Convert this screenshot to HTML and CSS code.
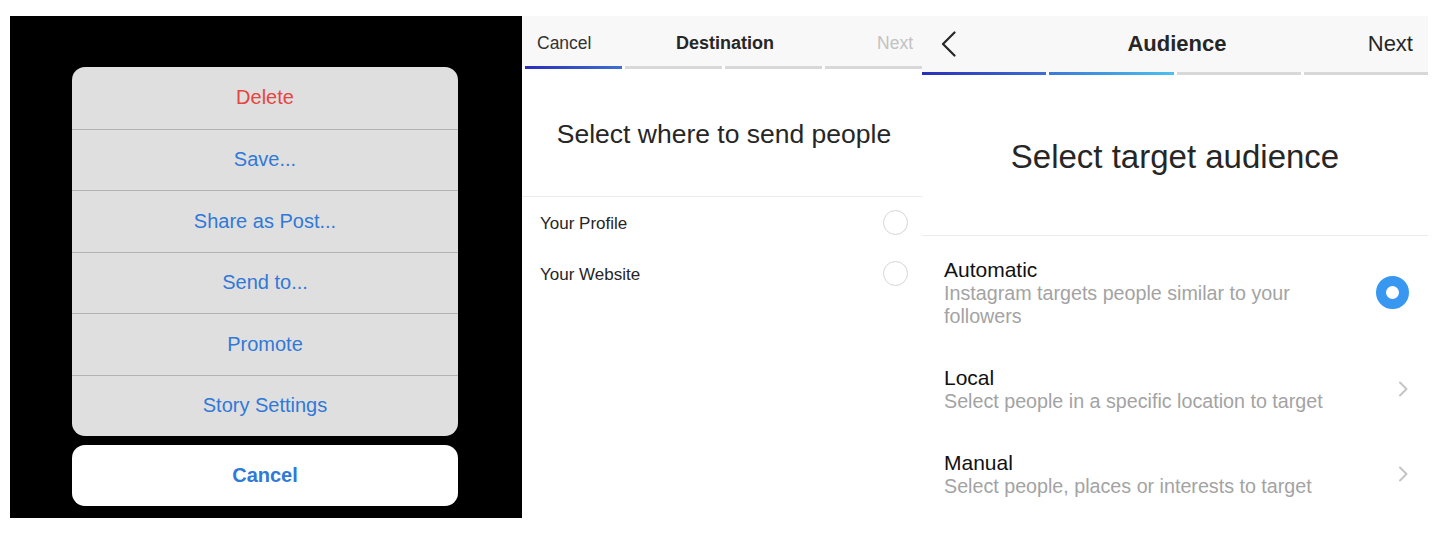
FILE: index.html
```html
<!DOCTYPE html>
<html>
<head>
<meta charset="utf-8">
<link rel="stylesheet" href="styles.css">
</head>
<body>
<div class="strip">
  <section class="sheet-panel">
    <div class="sheet-group">
      <div class="sheet-row danger">Delete</div>
      <div class="sheet-row">Save...</div>
      <div class="sheet-row">Share as Post...</div>
      <div class="sheet-row">Send to...</div>
      <div class="sheet-row">Promote</div>
      <div class="sheet-row">Story Settings</div>
    </div>
    <div class="sheet-cancel">Cancel</div>
  </section>

  <section class="dest-panel">
    <header class="dest-header">
      <span class="dest-left">Cancel</span>
      <span class="dest-title">Destination</span>
      <span class="dest-next">Next</span>
    </header>
    <div class="progress dest-progress">
      <span class="seg seg-dark"></span>
      <span class="seg"></span>
      <span class="seg"></span>
      <span class="seg"></span>
    </div>
    <h2 class="dest-heading">Select where to send people</h2>
    <div class="dest-list">
      <div class="dest-row"><span>Your Profile</span><span class="radio-empty"></span></div>
      <div class="dest-row"><span>Your Website</span><span class="radio-empty"></span></div>
    </div>
  </section>

  <section class="aud-panel">
    <header class="aud-header">
      <svg class="back" width="16" height="26" viewBox="0 0 16 26"><path d="M13.5 1.5 L2 13 L13.5 24.5" fill="none" stroke="#262626" stroke-width="2.2" stroke-linecap="round" stroke-linejoin="round"/></svg>
      <span class="aud-title">Audience</span>
      <span class="aud-next">Next</span>
    </header>
    <div class="progress aud-progress">
      <span class="seg seg-dark"></span>
      <span class="seg seg-light"></span>
      <span class="seg"></span>
      <span class="seg"></span>
    </div>
    <h2 class="aud-heading">Select target audience</h2>
    <div class="aud-list">
      <div class="aud-item">
        <div class="aud-text">
          <div class="aud-name">Automatic</div>
          <div class="aud-desc">Instagram targets people similar to your<br>followers</div>
        </div>
        <span class="radio-on"></span>
      </div>
      <div class="aud-item">
        <div class="aud-text">
          <div class="aud-name">Local</div>
          <div class="aud-desc">Select people in a specific location to target</div>
        </div>
        <svg class="chev" width="11" height="16" viewBox="0 0 11 16"><path d="M2 1.5 L8.5 8 L2 14.5" fill="none" stroke="#c4c4c4" stroke-width="2" stroke-linecap="round" stroke-linejoin="round"/></svg>
      </div>
      <div class="aud-item">
        <div class="aud-text">
          <div class="aud-name">Manual</div>
          <div class="aud-desc">Select people, places or interests to target</div>
        </div>
        <svg class="chev" width="11" height="16" viewBox="0 0 11 16"><path d="M2 1.5 L8.5 8 L2 14.5" fill="none" stroke="#c4c4c4" stroke-width="2" stroke-linecap="round" stroke-linejoin="round"/></svg>
      </div>
    </div>
  </section>
</div>
</body>
</html>
```

FILE: styles.css
```css
* { box-sizing: border-box; margin: 0; padding: 0; }
html, body { background: #ffffff; }
body {
  font-family: "Liberation Sans", Arial, sans-serif;
  width: 1448px;
  height: 538px;
  overflow: hidden;
}
.strip {
  display: flex;
  align-items: flex-start;
  padding: 16px 0 0 10px;
}

/* Left: action sheet */
.sheet-panel {
  width: 512px;
  height: 502px;
  background: #000;
  display: flex;
  flex-direction: column;
  padding: 51px 0 0 62px;
  gap: 9px;
}
.sheet-group {
  width: 386px;
  background: #dfdfdf;
  border-radius: 13px;
  overflow: hidden;
}
.sheet-row {
  height: 61.5px;
  display: flex;
  align-items: center;
  justify-content: center;
  font-size: 20px;
  color: #3179d8;
  border-top: 1px solid #b4b4b4;
}
.sheet-row:first-child { border-top: none; }
.sheet-row.danger { color: #e5463f; }
.sheet-cancel {
  width: 386px;
  height: 61px;
  background: #fff;
  border-radius: 13px;
  display: flex;
  align-items: center;
  justify-content: center;
  font-size: 20px;
  font-weight: bold;
  color: #3179d8;
}

/* Middle: destination */
.dest-panel {
  width: 400px;
  height: 502px;
  background: #fff;
}
.dest-header {
  height: 50px;
  background: #f8f8f8;
  display: grid;
  grid-template-columns: 1fr auto 1fr;
  align-items: center;
  padding: 4px 9px 0 15px;
  font-size: 17.5px;
}
.dest-left { color: #333; }
.dest-title { color: #262626; font-weight: bold; font-size: 18px; }
.dest-next { color: #c2c2c2; justify-self: end; }
.progress {
  display: flex;
  gap: 3px;
  height: 3px;
}
.dest-progress { padding-left: 3px; }
.seg { flex: 1; background: #d8d8d8; }
.seg-dark { background: linear-gradient(90deg, #2a2fb8, #3d6fd4); }
.seg-light { background: linear-gradient(90deg, #3a7ad8, #4cc0f0); }
.dest-heading {
  font-weight: normal;
  font-size: 26.5px;
  color: #262626;
  text-align: center;
  height: 128px;
  line-height: 130px;
  border-bottom: 1px solid #ececec;
  padding-left: 4px;
}
.dest-row {
  height: 51px;
  display: flex;
  align-items: center;
  justify-content: space-between;
  padding: 3px 14px 0 18px;
  font-size: 17px;
  color: #262626;
}
.radio-empty {
  width: 25px;
  height: 25px;
  border-radius: 50%;
  border: 1.5px solid #d6d6d6;
  margin-top: -3px;
}

/* Right: audience */
.aud-panel {
  width: 506px;
  height: 502px;
  background: #fff;
}
.aud-header {
  height: 56px;
  background: #f8f8f8;
  display: grid;
  grid-template-columns: 1fr auto 1fr;
  align-items: center;
  padding: 0 15px 0 19px;
  font-size: 22px;
  color: #262626;
}
.back { display: block; }
.aud-title { font-weight: bold; }
.aud-next { color: #262626; justify-self: end; }
.aud-heading {
  font-weight: normal;
  font-size: 33px;
  color: #262626;
  text-align: center;
  height: 161px;
  line-height: 164px;
  border-bottom: 1px solid #ececec;
}
.aud-list {
  display: flex;
  flex-direction: column;
  gap: 37px;
  padding: 21px 20px 0 22px;
}
.aud-item {
  display: flex;
  align-items: center;
  justify-content: space-between;
}
.aud-name {
  font-size: 21px;
  line-height: 25px;
  color: #111;
}
.aud-desc {
  font-size: 19.7px;
  line-height: 23px;
  color: #a3a3a3;
}
.radio-on {
  width: 33px;
  height: 33px;
  border-radius: 50%;
  border: 10.5px solid #3897f0;
  background: #fff;
  margin-right: -1px;
}
.chev { display: block; margin-right: -1px; }
```
